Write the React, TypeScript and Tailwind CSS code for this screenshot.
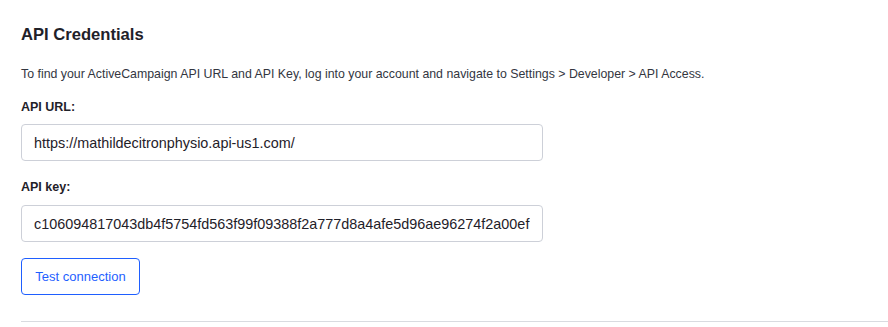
export default function App() {
  return (
    <div className="min-h-screen bg-white pl-[21px] font-['Liberation_Sans',Arial,sans-serif] text-[#1f2129]">
      <h2 className="pt-[25px] text-[16.6px] font-bold leading-[20px]">API Credentials</h2>
      <p className="mt-[21px] text-[12.35px] leading-[16px] text-[#33363f]">
        To find your ActiveCampaign API URL and API Key, log into your account and navigate to Settings &gt; Developer &gt; API Access.
      </p>

      <label className="mt-[17px] block text-[12.5px] font-bold leading-[16px]">API URL:</label>
      <input
        readOnly
        value="https://mathildecitronphysio.api-us1.com/"
        className="mt-[9px] block h-[37px] w-[522px] rounded-[4px] border border-[#cdd0d8] px-[12px] text-[14.4px] text-[#1f2129] outline-none"
      />

      <label className="mt-[18px] block text-[12.5px] font-bold leading-[16px]">API key:</label>
      <input
        readOnly
        value="c106094817043db4f5754fd563f99f09388f2a777d8a4afe5d96ae96274f2a00ef"
        className="mt-[10px] block h-[37px] w-[522px] rounded-[4px] border border-[#cdd0d8] px-[12px] text-[14.4px] text-[#1f2129] outline-none"
      />

      <button className="mt-[16px] block h-[37px] w-[119px] rounded-[4px] border border-[#1f5fff] text-[13px] font-medium text-[#1f5fff]">
        Test connection
      </button>

      <div className="mt-[26px] border-t border-[#d9dbe0]" />
    </div>
  );
}
